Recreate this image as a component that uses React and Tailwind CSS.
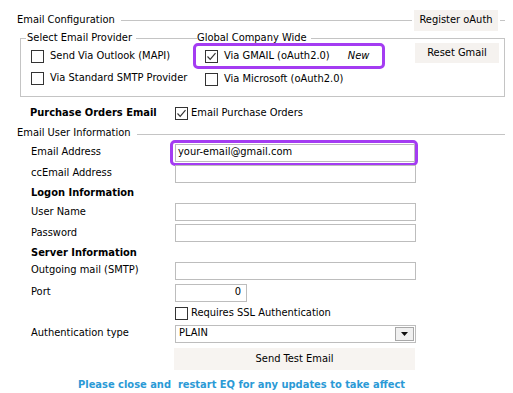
import React from "react";

const Check = ({ checked = false }) => (
  <span className="flex h-[13px] w-[13px] shrink-0 items-center justify-center border border-[#333] bg-white">
    {checked && (
      <svg width="11" height="11" viewBox="0 0 11 11">
        <path d="M1.5 5.5 L4.2 8.3 L9.5 2.2" fill="none" stroke="#333" strokeWidth="1.2" />
      </svg>
    )}
  </span>
);

const Field = ({ children, className = "" }) => (
  <div className={`flex h-[18px] items-center border border-[#bdbdbd] bg-white ${className}`}>{children}</div>
);

const Row = ({ label, h, bold = false, children }) => (
  <div className={`flex items-center ${h}`}>
    <div className={`w-[175px] shrink-0 pl-[31px] ${bold ? "font-bold" : ""}`}>{label}</div>
    {children}
  </div>
);

export default function App() {
  return (
    <div className="h-[393px] w-[513px] overflow-hidden bg-white pt-[10px] font-['DejaVu_Sans_Condensed','Liberation_Sans',sans-serif] text-[11px] text-black">
      {/* Email Configuration header */}
      <div className="flex h-[21px] items-center pl-[17px] pr-[8px]">
        <span>Email Configuration</span>
        <div className="ml-[6px] mr-[2px] flex-1 border-t border-[#c4c4c4]" />
        <button className="h-[21px] w-[84px] bg-[#f5f2ef]">Register oAuth</button>
        <div className="ml-[2px] w-[5px] border-t border-[#c4c4c4]" />
      </div>

      {/* Select Email Provider group */}
      <div className="ml-[20px] mr-[8px] mt-[1px]">
        <div className="flex h-[13px] items-center">
          <div className="flex w-[177px] items-center self-stretch">
            <div className="h-[7px] w-[6px] self-end border-l border-t border-[#c4c4c4]" />
            <span className="ml-[1px] mr-[4px]">Select Email Provider</span>
            <div className="h-[7px] flex-1 self-end border-t border-[#c4c4c4]" />
          </div>
          <span className="mr-[4px]">Global Company Wide</span>
          <div className="h-[7px] flex-1 self-end border-r border-t border-[#c4c4c4]" />
        </div>
        <div className="flex h-[52px] border-b border-l border-r border-[#c4c4c4]">
          <div className="w-[172px] shrink-0 pl-[10px] pt-[1px]">
            <div className="flex h-[21px] items-center gap-[6px]">
              <Check />
              <span>Send Via Outlook (MAPI)</span>
            </div>
            <div className="flex h-[22px] items-center gap-[6px]">
              <Check />
              <span>Via Standard SMTP Provider</span>
            </div>
          </div>
          <div className="w-[222px] shrink-0">
            <div className="-mt-[2px] flex h-[26px] w-[192px] items-center gap-[6px] whitespace-nowrap rounded-[5px] border-[3px] border-[#a43cf2] pl-[9px]">
              <Check checked />
              <span>Via GMAIL (oAuth2.0)</span>
              <span className="ml-[12px] italic">New</span>
            </div>
            <div className="flex h-[20px] items-center gap-[6px] pl-[12px]">
              <Check />
              <span>Via Microsoft (oAuth2.0)</span>
            </div>
          </div>
          <div>
            <button className="-mt-[2px] block h-[20px] w-[84px] bg-[#f5f2ef]">Reset Gmail</button>
          </div>
        </div>
      </div>

      {/* Purchase orders */}
      <div className="mt-[5px] flex h-[22px] items-center">
        <div className="w-[175px] shrink-0 pl-[30px] font-bold">Purchase Orders Email</div>
        <Check checked />
        <span className="ml-[3px]">Email Purchase Orders</span>
      </div>

      {/* Email User Information */}
      <div className="flex h-[18px] items-center pl-[17px] pr-[8px]">
        <span>Email User Information</span>
        <div className="ml-[6px] mt-[3px] flex-1 border-t border-[#c4c4c4]" />
      </div>

      <Row label="Email Address" h="h-[21px]">
        <div className="-ml-[5px] flex h-[26px] w-[248px] items-center rounded-[5px] border-[3px] border-[#a43cf2] pl-[2px]">
          <Field className="flex-1 pl-[2px]">your-email@gmail.com</Field>
        </div>
      </Row>
      <Row label="ccEmail Address" h="h-[21px]">
        <Field className="w-[241px]" />
      </Row>
      <Row label="Logon Information" h="h-[19px]" bold />
      <Row label="User Name" h="h-[18px]">
        <Field className="w-[241px]" />
      </Row>
      <Row label="Password" h="h-[24px]">
        <Field className="w-[241px]" />
      </Row>
      <Row label="Server Information" h="h-[16px]" bold />
      <Row label="Outgoing mail (SMTP)" h="h-[19px]">
        <Field className="w-[241px]" />
      </Row>
      <Row label="Port" h="h-[25px]">
        <Field className="w-[72px] justify-end pr-[5px]">0</Field>
      </Row>
      <Row label="" h="h-[17px]">
        <Check />
        <span className="ml-[3px]">Requires SSL Authentication</span>
      </Row>
      <Row label="Authentication type" h="h-[23px]">
        <Field className="w-[241px] justify-between pl-[3px] pr-[1px]">
          <span>PLAIN</span>
          <span className="flex h-[14px] w-[19px] items-center justify-center border border-[#a8a8a8] bg-[#f0f0f0]">
            <svg width="7" height="4" viewBox="0 0 7 4">
              <path d="M0 0 H7 L3.5 4 Z" fill="#111" />
            </svg>
          </span>
        </Field>
      </Row>
      <div className="mt-[3px] flex">
        <div className="w-[174px] shrink-0" />
        <button className="h-[22px] w-[241px] bg-[#f7f4f1]">Send Test Email</button>
      </div>

      <div className="mt-[7px] whitespace-pre pl-[78px] font-bold text-[#2b9ad6]">
        Please close and  restart EQ for any updates to take affect
      </div>
    </div>
  );
}
